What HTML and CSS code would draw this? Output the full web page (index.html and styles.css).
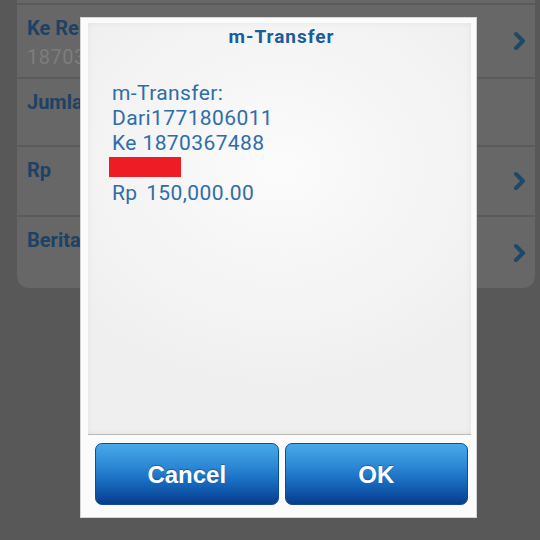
FILE: index.html
```html
<!DOCTYPE html>
<html>
<head>
<meta charset="utf-8">
<link rel="stylesheet" href="styles.css">
</head>
<body>
<div class="screen">
  <div class="card">
    <div class="row row1">
      <div class="row-text">
        <div class="label">Ke Rekening Tujuan</div>
        <div class="sub">1870367488</div>
      </div>
      <svg class="chev" width="16" height="22" viewBox="0 0 16 22"><path d="M5 4 L12 11 L5 18" fill="none" stroke="#1d4866" stroke-width="4" stroke-linecap="round" stroke-linejoin="round"/></svg>
    </div>
    <div class="row row2">
      <div class="row-text"><div class="label">Jumlah</div></div>
    </div>
    <div class="row row3">
      <div class="row-text"><div class="label">Rp</div></div>
      <svg class="chev" width="16" height="22" viewBox="0 0 16 22"><path d="M5 4 L12 11 L5 18" fill="none" stroke="#1d4866" stroke-width="4" stroke-linecap="round" stroke-linejoin="round"/></svg>
    </div>
    <div class="row row4">
      <div class="row-text"><div class="label">Berita</div></div>
      <svg class="chev" width="16" height="22" viewBox="0 0 16 22"><path d="M5 4 L12 11 L5 18" fill="none" stroke="#1d4866" stroke-width="4" stroke-linecap="round" stroke-linejoin="round"/></svg>
    </div>
  </div>

  <div class="dialog">
    <div class="panel">
      <div class="title">m-Transfer</div>
      <div class="message">
        <div class="line">m-Transfer:</div>
        <div class="line">Dari1771806011</div>
        <div class="line">Ke 1870367488</div>
        <div class="line"><span class="redact"></span></div>
        <div class="line">Rp <span class="amount">150,000.00</span></div>
      </div>
    </div>
    <div class="buttons">
      <div class="btn">Cancel</div>
      <div class="btn">OK</div>
    </div>
  </div>
</div>
</body>
</html>
```

FILE: styles.css
```css
html, body {
  margin: 0;
  padding: 0;
}
body {
  width: 540px;
  height: 540px;
  overflow: hidden;
  background: #585858;
  font-family: Roboto, "Noto Sans", sans-serif;
}
.screen {
  position: relative;
  width: 540px;
  height: 540px;
}
.card {
  margin-left: 17px;
  width: 518px;
  height: 288px;
  background: #676767;
  border-radius: 0 0 12px 12px;
  padding-top: 3px;
  box-sizing: border-box;
  display: flex;
  flex-direction: column;
}
.row {
  display: flex;
  align-items: flex-start;
  justify-content: space-between;
  border-top: 2px solid #5a5a5a;
  padding: 0 8px 0 10px;
  box-sizing: border-box;
}
.row1 { height: 74px; }
.row2 { height: 68px; }
.row3 { height: 70px; }
.row4 { height: 73px; }
.row-text {
  padding-top: 11px;
}
.label {
  font-size: 20px;
  line-height: 24px;
  font-weight: bold;
  color: #1e4264;
}
.sub {
  margin-top: 5px;
  font-size: 20px;
  line-height: 24px;
  color: #7d7d7d;
  letter-spacing: 0.5px;
}
.chev {
  align-self: center;
}

.dialog {
  position: absolute;
  left: 80px;
  top: 17px;
  width: 397px;
  height: 501px;
  background: #fbfbfb;
  border: 1px solid #d4d4d4;
  box-sizing: border-box;
  display: flex;
  flex-direction: column;
}
.panel {
  margin: 5px 5px 0 7px;
  height: 412px;
  box-sizing: border-box;
  border-bottom: 1px solid #b9b9b9;
  background: radial-gradient(ellipse 70% 55% at 50% 35%, #fbfbfb 0%, #f4f4f4 60%, #efefef 100%);
  box-shadow: inset 0 0 6px rgba(0,0,0,0.06);
  padding-top: 2px;
}
.title {
  text-align: center;
  font-size: 19px;
  line-height: 24px;
  font-weight: bold;
  color: #1a5c9c;
  letter-spacing: 1px;
  padding-left: 4px;
}
.message {
  margin-top: 32px;
  padding-left: 24px;
  color: #2f6da8;
  font-size: 21px;
  line-height: 25px;
  letter-spacing: 0.4px;
}
.line {
  height: 25px;
}
.amount {
  margin-left: 3px;
}
.redact {
  display: block;
  margin-left: -3px;
  width: 72px;
  height: 20px;
  background: #ee1c25;
  position: relative;
  top: 1px;
}
.buttons {
  display: flex;
  gap: 6px;
  padding: 8px 8px 0 14px;
}
.btn {
  flex: 1;
  height: 62px;
  border-radius: 7px;
  background: linear-gradient(to bottom, #46a9ea 0%, #2e8ad6 35%, #1668bd 65%, #073c8b 100%);
  border: 1px solid #0c4d97;
  box-sizing: border-box;
  display: flex;
  align-items: center;
  justify-content: center;
  color: #ffffff;
  font-family: "Liberation Sans", Arial, sans-serif;
  font-weight: bold;
  font-size: 24px;
  text-shadow: 0 -1px 1px rgba(0, 40, 100, 0.4);
  padding-top: 2px;
}
```
